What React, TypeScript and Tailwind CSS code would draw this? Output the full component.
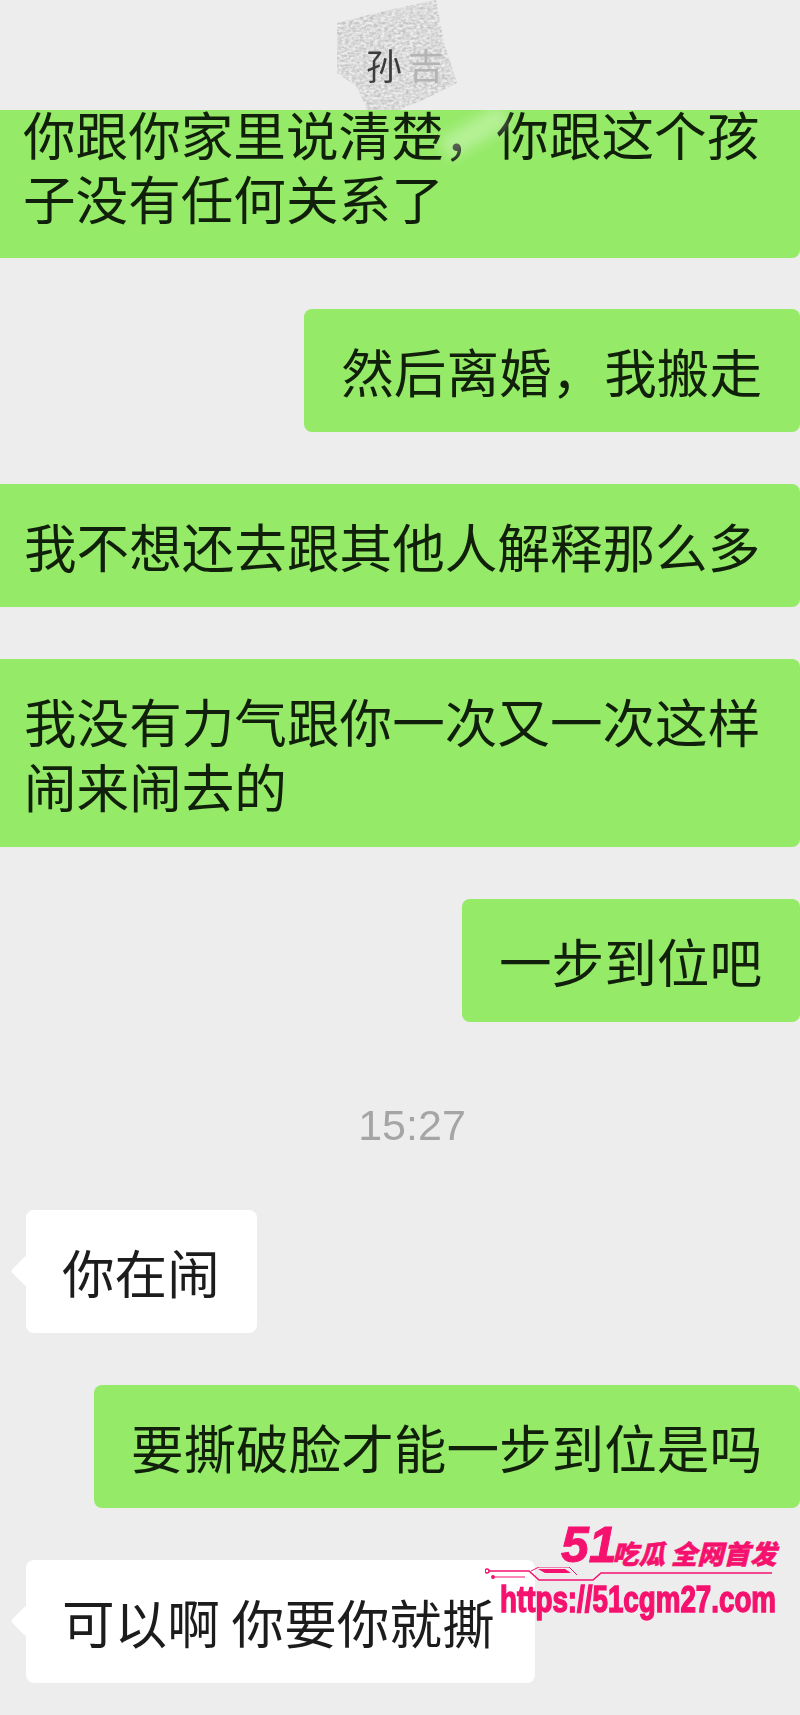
import React from 'react';

const cjk = 'font-["Noto_Sans_CJK_SC",sans-serif]';

const Green = ({ lines, wide }: { lines: string[]; wide?: boolean }) => (
    <div className="flex justify-end">
        <div
            className={`bg-[#95ea68] rounded-lg text-[52.6px] leading-[65px] text-[#10200a] whitespace-nowrap py-[29px] pr-[38px] ${wide ? 'w-full rounded-l-none pl-[24px]' : 'pl-[37px]'}`}
        >
            {lines.map((l) => (
                <div key={l} className="blur-[0.4px]">{l}</div>
            ))}
        </div>
    </div>
);

const White = ({ text, className }: { text: string; className: string }) => (
    <div className={`relative bg-white rounded-lg text-[52.6px] leading-[65px] text-[#1c1c1c] whitespace-nowrap py-[29px] pl-[36px] ${className}`}>
        <div className="absolute left-[-11px] top-[50px] w-[22px] h-[22px] rotate-45 bg-white rounded-[3px]" />
        <div className="relative blur-[0.4px]">{text}</div>
    </div>
);

const Scribble = () => (
    <svg className="absolute left-[335px] top-0 blur-[0.7px]" width="125" height="110" viewBox="0 0 125 110">
        <defs>
            <filter id="noise" x="0" y="0" width="100%" height="100%">
                <feTurbulence type="fractalNoise" baseFrequency="0.28 0.4" numOctaves="3" seed="9" />
                <feColorMatrix values="0 0 0 0 0.55  0 0 0 0 0.55  0 0 0 0 0.55  1.5 1.5 0 0 -1.05" />
                <feComposite in2="SourceGraphic" operator="in" />
            </filter>
        </defs>
        <polygon
            filter="url(#noise)"
            fill="#000"
            points="2,23 45,12 101,0 109,43 122,83 88,100 63,110 32,110 22,87 2,73"
        />
    </svg>
);

const Watermark = () => (
    <div className="absolute left-[485px] top-[1524px] w-[300px] h-[100px] text-[#f5126e]">
        <div className='absolute left-[76px] top-[-9px] text-[50px] leading-[60px] font-black italic font-["Liberation_Sans",sans-serif] [-webkit-text-stroke:1px_#f5126e]'>51</div>
        <div className={`absolute left-[127px] top-[13px] text-[26.4px] leading-[32px] font-black italic whitespace-nowrap [-webkit-text-stroke:0.5px_#f5126e] ${cjk}`}>吃瓜 全网首发</div>
        <svg className="absolute left-0 top-[43px]" width="292" height="20" viewBox="0 0 292 20" fill="none" stroke="#f5126e" strokeWidth="1.5">
            <circle cx="2" cy="4" r="2" />
            <path d="M4 4H44L54 13H108L116 6H287" />
            <circle cx="8" cy="10" r="1.2" fill="#f5126e" />
            <path d="M8 10H40" strokeWidth="1" />
            <path d="M46 4L54 0H84L92 8" strokeWidth="1" />
            <path d="M53 2H80L86 6H60Z" fill="#f5126e" stroke="none" />
        </svg>
        <div className='absolute left-[15px] top-[53px] origin-left scale-x-[0.75] text-[37px] leading-[46px] font-bold whitespace-nowrap font-["Liberation_Sans",sans-serif] [-webkit-text-stroke:1.5px_#f5126e]'>
            https://51cgm27.com
        </div>
    </div>
);

export default function App() {
    return (
        <div className={`relative w-[800px] h-[1715px] overflow-hidden bg-[#ededed] ${cjk}`}>
            <div className="relative h-[110px]">
                <Scribble />
                <div className="absolute left-[366px] top-[42px] text-[36px] leading-[44px] text-[#3c3c3c] blur-[0.7px] whitespace-nowrap">
                    孙<span className="ml-[6px] text-[#b4b4b4]">吉</span>
                </div>
            </div>

            <div className="relative h-[148px] bg-[#95ea68] rounded-br-lg overflow-hidden text-[52.6px] leading-[64px] text-[#10200a] whitespace-nowrap pl-[23px]">
                <div className="-mt-[9px] blur-[0.4px]">
                    <div>你跟你家里说清楚，你跟这个孩</div>
                    <div>子没有任何关系了</div>
                </div>
                <div className="absolute left-[440px] top-[10px] w-[70px] h-[24px] -rotate-30 bg-white/30 blur-[6px]" />
            </div>

            <div className="flex flex-col">
                <div className="mt-[51px]"><Green lines={['然后离婚，我搬走']} /></div>
                <div className="mt-[52px]"><Green wide lines={['我不想还去跟其他人解释那么多']} /></div>
                <div className="mt-[52px]"><Green wide lines={['我没有力气跟你一次又一次这样', '闹来闹去的']} /></div>
                <div className="mt-[52px]"><Green lines={['一步到位吧']} /></div>

                <div className='mt-[80px] h-[46px] pl-[24px] text-center text-[43px] leading-[46px] text-[#a5a5a5] font-["Liberation_Sans",sans-serif] blur-[0.4px]'>15:27</div>

                <div className="mt-[62px] pl-[26px]"><White text="你在闹" className="w-[231px]" /></div>
                <div className="mt-[52px]"><Green lines={['要撕破脸才能一步到位是吗']} /></div>
                <div className="mt-[52px] pl-[26px]"><White text="可以啊 你要你就撕" className="w-[509px]" /></div>
            </div>

            <Watermark />
        </div>
    );
}
